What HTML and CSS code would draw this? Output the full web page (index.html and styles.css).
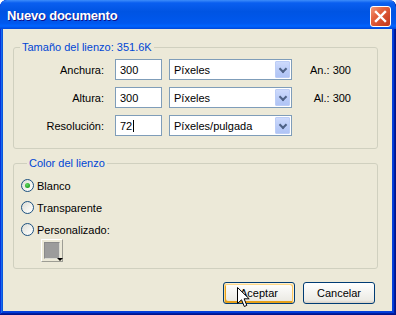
FILE: index.html
```html
<!DOCTYPE html>
<html>

<head>
    <title>Nuevo documento</title>
    <link rel="stylesheet" href="styles.css">
</head>

<body>
    <div class="window">
        <div class="titlebar">
            <span class="title">Nuevo documento</span>
            <span class="close">
                <svg width="19" height="19" viewBox="0 0 19 19">
                    <path d="M5 5 L14 14 M14 5 L5 14" stroke="#fff" stroke-width="2.4" stroke-linecap="square" />
                </svg>
            </span>
        </div>

        <div class="content">
            <fieldset class="group size">
                <legend>Tamaño del lienzo: 351.6K</legend>

                <div class="row">
                    <span class="lbl">Anchura:</span>
                    <span class="field">300</span>
                    <span class="combo"><span class="combo-text">Píxeles</span><span class="drop"></span></span>
                    <span class="info">An.: 300</span>
                </div>
                <div class="row">
                    <span class="lbl">Altura:</span>
                    <span class="field">300</span>
                    <span class="combo"><span class="combo-text">Píxeles</span><span class="drop"></span></span>
                    <span class="info">Al.: 300</span>
                </div>
                <div class="row">
                    <span class="lbl">Resolución:</span>
                    <span class="field">72<span class="caret"></span></span>
                    <span class="combo"><span class="combo-text">Píxeles/pulgada</span><span class="drop"></span></span>
                    <span class="info"></span>
                </div>
            </fieldset>

            <fieldset class="group color">
                <legend>Color del lienzo</legend>
                <div class="option"><span class="radio checked"></span>Blanco</div>
                <div class="option"><span class="radio"></span>Transparente</div>
                <div class="option"><span class="radio"></span>Personalizado:</div>
                <div class="swatch"><span class="swatch-fill"></span><span class="swatch-arrow"></span></div>
            </fieldset>

            <div class="buttons">
                <button class="btn default">Aceptar</button>
                <button class="btn">Cancelar</button>
            </div>
        </div>

        <!-- mouse pointer resting over the default button -->
        <svg class="pointer" width="13" height="21" viewBox="0 0 13 21">
            <path d="M0.5 0.5 L0.5 16.5 L4.5 12.8 L7.3 19.5 L9.8 18.4 L7.1 11.8 L12.2 11.8 Z" fill="#fff" stroke="#000" stroke-width="1" stroke-linejoin="miter" />
        </svg>
    </div>
</body>

</html>
```

FILE: styles.css
```css
body {
    margin: 0;
    background: #fff;
    font-family: "Liberation Sans", Arial, sans-serif;
    font-size: 11px;
    color: #000;
}

.window {
    position: relative;
    width: 396px;
    height: 315px;
    box-sizing: border-box;
    padding: 0 4px 4px 3px;
    border-radius: 7px 7px 0 0;
    background: #0840d8;
    box-shadow: inset -1px -1px #00138c, inset 1px 0 #0831d9, inset -2px -2px #001ea0, inset 2px 0 #166aee, inset -3px -3px #003bda, inset 3px 0 #0855dd;
    overflow: hidden;
}

.titlebar {
    height: 29px;
    margin: 0 -4px 0 -3px;
    padding: 0 5px 0 7px;
    display: flex;
    align-items: center;
    justify-content: space-between;
    border-radius: 7px 7px 0 0;
    background: linear-gradient(180deg, #3d8dfa 0%, #0a5ff0 10%, #0054e3 40%, #0058ee 80%, #0064ff 90%, #0047da 100%);
}

.title {
    color: #fff;
    font-weight: bold;
    font-size: 13px;
    letter-spacing: -0.2px;
    text-shadow: 1px 1px #0f1089;
    margin-top: 1px;
}

.close {
    width: 19px;
    height: 19px;
    border: 1px solid #fff;
    border-radius: 3px;
    background: linear-gradient(135deg, #f29a7c 0%, #e5643f 35%, #d1492a 70%, #c2381c 100%);
    display: flex;
    margin-top: 3px;
}

.content {
    height: 282px;
    box-sizing: border-box;
    background: #ece9d8;
    padding-top: 12px;
}

.group {
    margin: 0 0 0 10px;
    width: 365px;
    box-sizing: border-box;
    border: 1px solid #d0d0bf;
    border-radius: 3px;
    min-inline-size: 0;
}

.group legend {
    color: #0046d5;
    line-height: 13px;
    padding: 0 2px;
    margin-left: 6px;
}

.size {
    padding: 5px 0 12px 0;
}

.row {
    display: flex;
    align-items: center;
    height: 21px;
}

.row + .row {
    margin-top: 7px;
}

.lbl {
    width: 90px;
    text-align: right;
}

.field {
    margin-left: 11px;
    width: 47px;
    height: 21px;
    box-sizing: border-box;
    border: 1px solid #7f9db9;
    background: #fff;
    padding-left: 4px;
    display: flex;
    align-items: center;
}

.caret {
    width: 1px;
    height: 12px;
    background: #000;
    margin-left: 1px;
}

.combo {
    margin-left: 7px;
    width: 123px;
    height: 21px;
    box-sizing: border-box;
    border: 1px solid #7f9db9;
    background: #fff;
    padding: 1px;
    display: flex;
    align-items: center;
    justify-content: space-between;
}

.combo-text {
    padding-left: 3px;
}

.drop {
    width: 15px;
    height: 17px;
    box-sizing: border-box;
    border: 1px solid #bccdf6;
    border-radius: 1px;
    background: linear-gradient(180deg, #cddafc 0%, #b9cbf7 60%, #b0c4f5 100%);
    position: relative;
}

.drop::after {
    content: "";
    position: absolute;
    left: 4px;
    top: 4px;
    width: 4px;
    height: 4px;
    border-right: 2px solid #4d6185;
    border-bottom: 2px solid #4d6185;
    transform: rotate(45deg);
}

.info {
    width: 59px;
    text-align: right;
}

.color {
    margin-top: 8px;
    padding: 9px 0 6px 7px;
}

.option {
    display: flex;
    align-items: center;
    height: 13px;
}

.option + .option {
    margin-top: 9px;
}

.radio {
    width: 13px;
    height: 13px;
    box-sizing: border-box;
    border: 1px solid #1c5180;
    border-radius: 50%;
    background: linear-gradient(135deg, #dcdcd5 0%, #f4f4f0 60%, #fff 100%);
    margin-right: 3px;
    position: relative;
}

.radio.checked::after {
    content: "";
    position: absolute;
    left: 3px;
    top: 3px;
    width: 5px;
    height: 5px;
    border-radius: 50%;
    background: radial-gradient(circle at 40% 35%, #63d863 0%, #24a224 70%, #1c8c1c 100%);
}

.swatch {
    margin: 3px 0 0 20px;
    width: 22px;
    height: 23px;
    box-sizing: border-box;
    border: 1px solid;
    border-color: #fff #9d9d94 #9d9d94 #fff;
    padding: 2px;
    position: relative;
}

.swatch-fill {
    display: block;
    height: 100%;
    background: #9c9c9c;
    border: 1px solid;
    border-color: #8a8a8a #dcdcd4 #dcdcd4 #8a8a8a;
    box-sizing: border-box;
}

.swatch-arrow {
    position: absolute;
    right: -1px;
    bottom: 0;
    width: 0;
    height: 0;
    border-left: 3px solid transparent;
    border-right: 3px solid transparent;
    border-top: 3px solid #000;
}

.buttons {
    display: flex;
    justify-content: flex-end;
    gap: 8px;
    margin-top: 13px;
    padding-right: 17px;
}

.btn {
    width: 72px;
    height: 22px;
    box-sizing: border-box;
    border: 1px solid #003c74;
    border-radius: 3px;
    background: linear-gradient(180deg, #fff 0%, #ecebe5 86%, #d8d0c4 100%);
    font-family: "Liberation Sans", Arial, sans-serif;
    font-size: 11px;
    color: #000;
    padding: 0;
}

.btn.default {
    box-shadow: inset -1px 1px #fff0cf, inset 1px 2px #fdd889, inset -2px 2px #fbc761, inset 2px -2px #e5a01a;
}

.pointer {
    position: absolute;
    left: 237px;
    top: 287px;
}
```
